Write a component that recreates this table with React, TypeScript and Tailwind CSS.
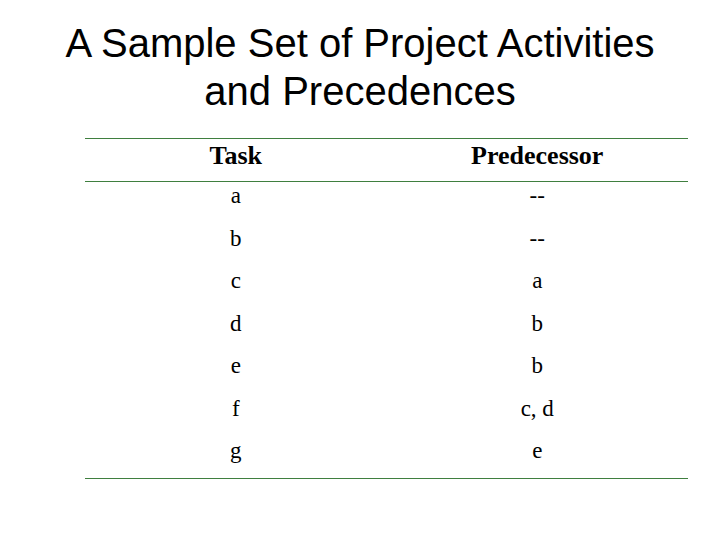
import React from 'react';

const rows: [string, string][] = [
  ['a', '--'],
  ['b', '--'],
  ['c', 'a'],
  ['d', 'b'],
  ['e', 'b'],
  ['f', 'c, d'],
  ['g', 'e'],
];

export default function App() {
  return (
    <div className="w-[720px] h-[540px] bg-white flex flex-col items-center">
      <h1
        className="mt-[19px] text-[40px] leading-[48px] text-black text-center"
        style={{ fontFamily: '"Liberation Sans", Arial, sans-serif' }}
      >
        A Sample Set of Project Activities
        <br />
        and Precedences
      </h1>

      <div
        className="mt-[23px] ml-[53px] w-[603px] border-t border-b border-[#3f7f3f] text-black"
        style={{ fontFamily: '"Liberation Serif", "Times New Roman", serif' }}
      >
        <div className="grid grid-cols-2 h-[43px] pt-[2px] leading-[30px] border-b border-[#3f7f3f] text-[26px] font-bold">
          <div className="text-center">Task</div>
          <div className="text-center">Predecessor</div>
        </div>
        <div className="-mt-[7px] pb-[5px]">
          {rows.map(([task, pred]) => (
            <div key={task} className="grid grid-cols-2 h-[42.5px] items-center text-[23px]">
              <div className="text-center">{task}</div>
              <div className="text-center">{pred}</div>
            </div>
          ))}
        </div>
      </div>
    </div>
  );
}
